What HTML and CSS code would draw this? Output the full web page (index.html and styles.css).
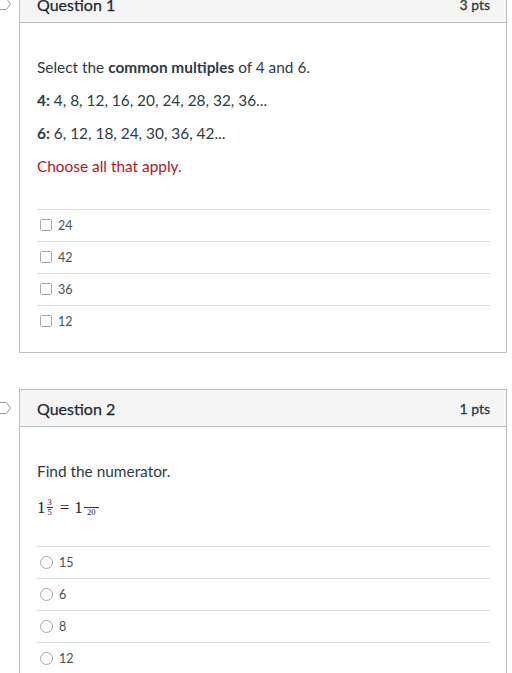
FILE: index.html
```html
<!DOCTYPE html>
<html lang="en">
<head>
<meta charset="utf-8">
<link rel="stylesheet" href="styles.css">
</head>
<body>
<div class="quiz">
  <div class="question">
    <div class="gutter">
      <svg class="flag" width="12" height="14" viewBox="0 0 12 14"><path d="M-2 1.5 H6.5 L10.5 7 L6.5 12.5 H-2" fill="none" stroke="#9aa0a4" stroke-width="1"/></svg>
    </div>
    <div class="card">
      <div class="card-header">
        <span class="q-title">Question 1</span>
        <span class="q-pts">3 pts</span>
      </div>
      <div class="card-body">
        <p class="q-text">Select the <strong>common multiples</strong> of 4 and 6.</p>
        <p class="q-text"><strong>4:</strong> 4, 8, 12, 16, 20, 24, 28, 32, 36...</p>
        <p class="q-text"><strong>6:</strong> 6, 12, 18, 24, 30, 36, 42...</p>
        <p class="q-text warn">Choose all that apply.</p>
        <div class="answers">
          <label class="answer"><span class="box"></span>24</label>
          <label class="answer"><span class="box"></span>42</label>
          <label class="answer"><span class="box"></span>36</label>
          <label class="answer"><span class="box"></span>12</label>
        </div>
      </div>
    </div>
  </div>

  <div class="question">
    <div class="gutter">
      <svg class="flag" width="12" height="14" viewBox="0 0 12 14"><path d="M-2 1.5 H6.5 L10.5 7 L6.5 12.5 H-2" fill="none" stroke="#9aa0a4" stroke-width="1"/></svg>
    </div>
    <div class="card">
      <div class="card-header">
        <span class="q-title">Question 2</span>
        <span class="q-pts">1 pts</span>
      </div>
      <div class="card-body">
        <p class="q-text">Find the numerator.</p>
        <div class="math">
          <span class="mn">1</span><span class="frac"><span class="num">3</span><span class="den">5</span></span><span class="mo">=</span><span class="mn">1</span><span class="frac blank"><span class="num">&nbsp;</span><span class="den">20</span></span>
        </div>
        <div class="answers radios">
          <label class="answer"><span class="radio"></span>15</label>
          <label class="answer"><span class="radio"></span>6</label>
          <label class="answer"><span class="radio"></span>8</label>
          <label class="answer"><span class="radio"></span>12</label>
        </div>
      </div>
    </div>
  </div>
</div>
</body>
</html>
```
FILE: styles.css
```css
html, body {
  margin: 0;
  padding: 0;
  background: #ffffff;
}
body {
  font-family: Lato, "Open Sans", "Liberation Sans", sans-serif;
  color: #2d3b45;
  overflow: hidden;
}
.quiz {
  margin-top: -15px;
  display: flex;
  flex-direction: column;
  gap: 36px;
}
.question {
  display: flex;
  align-items: flex-start;
}
.gutter {
  width: 19px;
  flex: none;
  padding-top: 12px;
}
.flag {
  display: block;
}
.card {
  width: 486px;
  border: 1px solid #b9bfc3;
  background: #fff;
}
.card-header {
  height: 36px;
  background: #f5f5f5;
  border-bottom: 1px solid #b9bfc3;
  display: flex;
  align-items: center;
  justify-content: space-between;
  padding: 0 16px 0 17px;
}
.q-title {
  font-size: 16px;
  font-weight: 400;
  color: #1f2a32;
  -webkit-text-stroke: 0.25px #1f2a32;
}
.q-pts {
  font-size: 14px;
  font-weight: 400;
  color: #2d3b45;
  -webkit-text-stroke: 0.3px #2d3b45;
}
.card-body {
  padding: 33px 16px 15px 17px;
}
.q-text {
  margin: 0 0 11px;
  font-size: 15.4px;
  line-height: 22px;
}
.q-text strong {
  font-weight: 700;
}
.warn {
  color: #b0191e;
}
.answers {
  margin-top: 32px;
}
.answer {
  display: flex;
  align-items: center;
  border-top: 1px solid #dcdfe1;
  font-size: 12.5px;
  color: #4a4f54;
  padding-left: 3px;
  padding-bottom: 1px;
  height: 30px;
}
.box {
  width: 10px;
  height: 10px;
  border: 1px solid #a3a8ac;
  border-radius: 1.5px;
  margin-right: 6px;
}
.radio {
  width: 11px;
  height: 11px;
  border: 1px solid #a3a8ac;
  border-radius: 50%;
  margin-right: 6px;
}
.math {
  font-family: "Liberation Serif", "DejaVu Serif", serif;
  font-size: 17px;
  color: #222;
  display: flex;
  align-items: center;
  height: 22px;
  margin-top: 14px;
}
.mn {
  line-height: 1;
}
.mo {
  margin: 0 5px 0 6px;
  font-size: 17px;
  line-height: 1;
}
.frac {
  display: inline-flex;
  flex-direction: column;
  align-items: center;
  font-size: 8.5px;
  line-height: 9px;
  margin: 0 1px;
  padding-top: 1px;
}
.frac .num {
  border-bottom: 1px solid #333;
  padding: 0 1px;
}
.frac.blank .num {
  width: 13px;
}
.radios {
  margin-top: 28px;
}
```
